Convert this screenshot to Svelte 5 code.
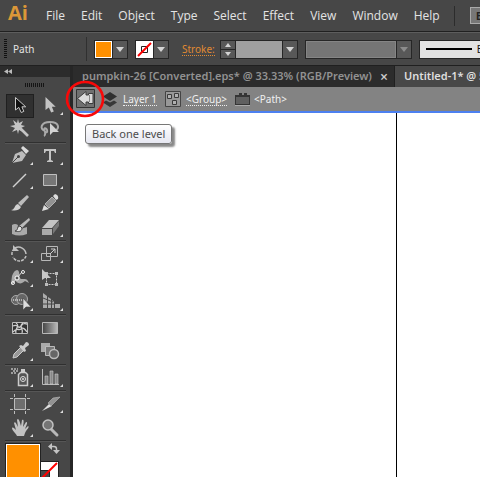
<script lang="ts">
  const menus = ["File", "Edit", "Object", "Type", "Select", "Effect", "View", "Window", "Help"];

  type Tool = { name: string; icon: string; flyout?: boolean };

  const groups: Tool[][] = [
    [
      { name: "Selection", icon: `<path d="M9.5 3.5V16l3.3-2.6 2.4 5.1 2.6-1.1-1.9-4.6h3.8z" fill="#111" stroke="#c9c9c9"/>` },
      { name: "Direct Selection", flyout: true, icon: `<path d="M9.5 3V16l3.3-2.6 2.4 5.1 2.6-1.1-1.9-4.6h3.8z" fill="#c4c4c4"/>` },
      { name: "Magic Wand", icon: `<path d="M14 10l8 8" stroke="#c4c4c4" stroke-width="2.6"/><path d="M12 1l1 4 4-2-2 4 4 1-4 2 2 4-4-2-1 4-1-4-5 2 3-4-5-2 5-1-2-5 4 3z" fill="#c4c4c4"/>` },
      { name: "Lasso", icon: `<path d="M9 13C3 11 5 4 14 4s10 6 5 9M9 13c-2-3 1-4 2-1s-2 3-2 1c0 3 1 4-1 5" stroke="#aaa" stroke-width="2"/><path d="M14 5v12l3-3h6z" fill="#d2d2d2"/>` },
    ],
    [
      { name: "Pen", flyout: true, icon: `<path d="M6 19l3-9 7-3 4 4-4 6z" fill="#bcbcbc"/><path d="M15 4l2-2 6 5-3 3z" fill="#dadada"/><path d="M6 19l6-6" stroke="#444"/><circle cx="12.5" cy="12.5" r="1.5" fill="#444"/>` },
      { name: "Type", flyout: true, icon: `<path d="M8 5h12v4h-1l-1-2h-3v9l2 1v1h-6v-1l2-1V7h-3L9 9H8z" fill="#c4c4c4"/>` },
      { name: "Line Segment", flyout: true, icon: `<path d="M7 19L20 6" stroke="#d0d0d0" stroke-width="1.5"/>` },
      { name: "Rectangle", flyout: true, icon: `<path d="M7.5 6.5h13v11h-13z" fill="#777" stroke="#c0c0c0"/>` },
      { name: "Paintbrush", icon: `<path d="M21 3l2 2-8 9-3-3z" fill="#bcbcbc"/><path d="M5 18c4 0 3-5 7-6l3 3c-2 4-7 4-10 3z" fill="#d0d0d0"/>` },
      { name: "Pencil", flyout: true, icon: `<path d="M6 19l2-6 5 4z" fill="#ddd"/><path d="M9 12l7-7 4 4-7 7z" fill="#929292" stroke="#b0b0b0"/><path d="M17 4l2-2q4 1 3 5l-2 1z" fill="#ddd"/>` },
      { name: "Blob Brush", icon: `<path d="M6 9q3-2 6 0l-1 5 10-3v7q-8 3-15 0z" fill="#aaa"/><path d="M23 2l1 2-8 8-3-2z" fill="#bbb"/><path d="M9 15c4-1 1-4 5-5l2 2c0 4-4 4-7 3z" fill="#e0e0e0" stroke="#444"/>` },
      { name: "Eraser", flyout: true, icon: `<path d="M6 12l7-8h10l-7 8z" fill="#c4c4c4"/><path d="M6 13h10v6H6z" fill="#aaa"/><path d="M17 12l6-7v5l-6 8z" fill="#777"/>` },
    ],
    [
      { name: "Rotate", flyout: true, icon: `<path d="M9 6a7.5 7.5 0 0 1 11 6" stroke="#c0c0c0" stroke-width="1.5"/><path d="M20 14a7 7 0 0 1-13 1M6 13a7 7 0 0 1 2-6" stroke="#c0c0c0" stroke-width="1.5" stroke-dasharray="3 1"/><path d="M7 3v6h6z" fill="#c0c0c0"/>` },
      { name: "Scale", flyout: true, icon: `<path d="M10.500 4.500h11v10h-11zM5.500 11.500h9v7h-9z" stroke="#b8b8b8"/><path d="M14 12l5-5m-4 0h4v4" stroke="#ccc"/>` },
      { name: "Width", flyout: true, icon: `<path d="M6 10c2-6 6-8 7-4 1 5 0 7 3 7s5-1 7 4l-4-2c-5 5-9 1-10-1-2 5-3 5-4 4z" fill="#aaa"/><path d="M7 17L16 6" stroke="#ddd"/><circle cx="7" cy="17" r="1.500" stroke="#eee"/><circle cx="17" cy="6" r="1.500" stroke="#eee"/><circle cx="11" cy="12" r="2" fill="#555" stroke="#fff"/>` },
      { name: "Free Transform", icon: `<path d="M10.500 7.500h10v11h-10z" stroke="#ccc" stroke-dasharray="2 1"/><path d="M9 6h3v3H9zM19 6h3v3h-3zM9 17h3v3H9zM19 17h3v3h-3z" fill="#bbb"/><path d="M6 3v11l3-2h6z" fill="#c8c8c8"/>` },
      { name: "Shape Builder", flyout: true, icon: `<circle cx="10" cy="10" r="4.500" fill="#666" stroke="#aaa"/><circle cx="16" cy="9" r="5.500" fill="#666" stroke="#aaa"/><path d="M7 10h11" stroke="#fff" stroke-dasharray="1 1"/><path d="M17 8v12l3-3h5z" fill="#ddd" stroke="#444" stroke-width=".6"/>` },
      { name: "Perspective Grid", flyout: true, icon: `<path d="M7 3l4 3v12H7zM12 7l3 2v9h-3zM16 10l2 2v6h-2zM19 14h5v4h-5z" fill="#ababab"/><path d="M7 14h12M7 8l10 4" stroke="#474747"/>` },
    ],
    [
      { name: "Mesh", icon: `<path d="M6.500 6.500h15v11h-15z" fill="#333" stroke="#bbb"/><path d="M7 10c5-3 5 4 8 0s3-2 6-2M7 16c4-5 6-1 8-3s4 0 6 3M10 7c5 3-2 6 0 10M17 7c-5 3 1 6-1 10" stroke="#ccc" stroke-width="1.300"/>` },
      { name: "Gradient", icon: `<linearGradient id="shade"><stop stop-color="#444"/><stop offset="1" stop-color="#bbb"/></linearGradient><path d="M6.500 6.500h15v11h-15z" fill="url(#shade)" stroke="#b8b8b8"/>` },
      { name: "Eyedropper", flyout: true, icon: `<path d="M7 18l1-4 7-7 3 3-7 7z" fill="#999" stroke="#ccc"/><path d="M13 6l2-1 2 1 3-4q3 0 3 3l-4 3 1 3-2 1z" fill="#ccc"/>` },
      { name: "Blend", icon: `<path d="M5 3h9v9H5z" fill="#aaa"/><path d="M9.500 6.500h9v9h-9z" fill="#777" stroke="#bbb"/><circle cx="18" cy="14" r="4.500" fill="#666" stroke="#bbb" stroke-width="1.500"/>` },
    ],
    [
      { name: "Symbol Sprayer", flyout: true, icon: `<path d="M5 3h7M7 5h6M5 7h5" stroke="#bbb" stroke-width="1.500" stroke-dasharray="2 1"/><path d="M15 3h4v3h-4z" fill="#ccc"/><path d="M12.500 8.500l2-2h5l2 2v11h-9z" fill="#555" stroke="#ccc" stroke-width="1.500"/><circle cx="17" cy="13" r="2.500" stroke="#ddd"/><circle cx="17" cy="13" r="1" fill="#ddd"/>` },
      { name: "Column Graph", flyout: true, icon: `<path d="M6.500 3v15.500H23" stroke="#bbb"/><path d="M9 10h3v8H9zM14 5h3v13h-3zM19 8h3v10h-3z" fill="#888" stroke="#ccc" stroke-width=".6"/>` },
    ],
    [
      { name: "Artboard", icon: `<path d="M8.500 6.500h11v11h-11z" fill="#6e6e6e" stroke="#bdbdbd"/><path d="M8.500 2v3M19.500 2v3M8.500 19v3M19.500 19v3M4 6.500h3M21 6.500h3M4 17.500h3M21 17.500h3" stroke="#bdbdbd"/>` },
      { name: "Slice", flyout: true, icon: `<path d="M6 19l7-7 3 2z" fill="#ddd"/><path d="M12 11l5-5 7-1-9 9z" fill="#929292" stroke="#bbb" stroke-width=".6"/>` },
      { name: "Hand", flyout: true, icon: `<path d="M11 20c-1-3-5-5-5-8 1-1 2 0 4 2L8 7c1-2 2 0 4 4l-1-7c1-2 2-1 4 6l1-6c2-1 2 1 1 7l3-5c2 0 1 2-1 7l3-3c2 1-1 3-3 7l-1 3z" fill="#c2c2c2"/>` },
      { name: "Zoom", icon: `<path d="M15 13l6 6" stroke="#b8b8b8" stroke-width="3" stroke-linecap="round"/><circle cx="12" cy="9" r="5" fill="#757575" stroke="#c2c2c2" stroke-width="1.500"/>` },
    ],
  ];

  let active = $state("Selection");
</script>

<div class="window">
  <header class="menubar">
    <span class="logo">Ai</span>
    <nav class="menus">
      {#each menus as menu}
        <button class="menu">{menu}</button>
      {/each}
    </nav>
    <button class="bridge" aria-label="Go to Bridge">Br</button>
  </header>

  <section class="control-bar">
    <span class="grip"></span>
    <span class="selection-type">Path</span>

    <div class="combo fill">
      <button class="swatch orange" aria-label="Fill color"></button>
      <button class="drop" aria-label="Fill swatches"><i class="down"></i></button>
    </div>
    <div class="combo">
      <button class="swatch" aria-label="Stroke color">
        <svg width="17" height="17" viewBox="0 0 17 17">
          <path d="M0 0h17v17H0z" fill="#fff" />
          <path d="M5.500 5.500h6v6h-6z" fill="#fff" stroke="#222" />
          <path d="M2 15L15 2" stroke="#f00" stroke-width="2" />
        </svg>
      </button>
      <button class="drop" aria-label="Stroke swatches"><i class="down"></i></button>
    </div>

    <label class="stroke-label" for="stroke-weight">Stroke:</label>
    <div class="combo weight">
      <span class="stepper">
        <button aria-label="Increase stroke"><i class="up"></i></button>
        <button aria-label="Decrease stroke"><i class="down"></i></button>
      </span>
      <input id="stroke-weight" type="text" />
      <button class="drop" aria-label="Stroke weights"><i class="down"></i></button>
    </div>
    <div class="combo profile">
      <input type="text" aria-label="Width profile" disabled />
      <button class="drop" aria-label="Width profiles" disabled><i class="down"></i></button>
    </div>
    <button class="brush" aria-label="Brush definition"><span class="brush-line"></span>Basic</button>
  </section>

  <div class="workspace">
    <aside class="tools">
      <button class="collapse" aria-label="Collapse panel">
        <svg width="9" height="5" viewBox="0 0 9 5"><path d="M4 0v5L0 2.500zM8 0v5L4 2.500z" fill="#bbb" /></svg>
      </button>
      <div class="panel-grip"></div>
      {#each groups as group}
        <div class="tool-group">
          {#each group as tool}
            <button
              class="tool"
              class:active={active === tool.name}
              aria-label={tool.name}
              onclick={() => (active = tool.name)}
            >
              <svg width="28" height="24" viewBox="0 0 28 24" fill="none">
                {@html tool.icon}
                {#if tool.flyout}<path d="M27 18v3h-3z" fill="#ddd" />{/if}
              </svg>
            </button>
          {/each}
        </div>
      {/each}
      <div class="colors">
        <button class="color-fill" aria-label="Fill"></button>
        <button class="swap" aria-label="Swap fill and stroke">
          <svg width="12" height="12" viewBox="0 0 12 12" fill="none">
            <path d="M3 3.500h3q2.500 0 2.500 2.500v3" stroke="#c4c4c4" stroke-width="1.500" />
            <path d="M0 3.500L4 0v7zM5 7h7l-3.500 4z" fill="#c4c4c4" />
          </svg>
        </button>
        <button class="color-stroke" aria-label="Stroke">
          <svg width="34" height="34" viewBox="0 0 34 34" fill="none">
            <path d="M0 0h34v34H0zM9 9v16h16V9z" fill="#fff" fill-rule="evenodd" />
            <path d="M8.500 8.500h17v17h-17z" stroke="#222" />
            <path d="M1 33L33 1" stroke="#f00" stroke-width="2" />
          </svg>
        </button>
      </div>
    </aside>

    <main class="document">
      <div class="tabs">
        <div class="tab">
          <span>pumpkin-26 [Converted].eps* @ 33.33% (RGB/Preview)</span>
          <button class="close" aria-label="Close document">×</button>
        </div>
        <div class="tab current"><span>Untitled-1* @ 50% (RGB/Preview)</span></div>
      </div>

      <div class="breadcrumbs">
        <div class="back-wrap">
          <button class="back" aria-label="Back one level" aria-describedby="back-tip">
            <svg width="19" height="19" viewBox="0 0 19 19">
              <path d="M.5.5h18v18H.5z" fill="#707070" stroke="#333" />
              <path d="M1.500 9.500L10 2.500v3.500h2.500V4.500H17v10h-4.500V13H10v3.500z" fill="#dadada" stroke="#3c3c3c" />
              <path d="M13.500 6v7" stroke="#888" />
            </svg>
          </button>
          <svg class="ring" width="40" height="38" viewBox="0 0 40 38" fill="none">
            <ellipse cx="20" cy="19" rx="18" ry="17" stroke="#f80808" stroke-width="2.600" />
          </svg>
          <div class="tooltip" id="back-tip" role="tooltip">Back one level</div>
        </div>
        <svg class="layers" width="14" height="15" viewBox="0 0 14 15">
          <path d="M0 10.500l3-2 4 2 4-2 3 2-7 4.500z" fill="#383838" />
          <path d="M7 0l7 4.500L7 9 0 4.500z" fill="#303030" />
        </svg>
        <a href="#layer">Layer 1</a>
        <svg class="group-icon" width="16" height="16" viewBox="0 0 16 16">
          <path d="M.5.5h15v15H.5z" fill="#989898" stroke="#444" />
          <path d="M2.500 3.500h4v4h-4zM9.500 2.500h4v4h-4zM7.500 9.500h4v4h-4z" fill="#b0b0b0" stroke="#3b3b3b" />
        </svg>
        <a href="#group">&lt;Group&gt;</a>
        <svg class="path-icon" width="15" height="13" viewBox="0 0 15 13">
          <path d="M1 2h3V0h3v2h2V0h3v2h3v10H0V2z" fill="#353535" />
          <path d="M1 4h13v7H1z" fill="#606060" />
          <path d="M0 12.500h15" stroke="#aaa" />
        </svg>
        <span class="leaf">&lt;Path&gt;</span>
      </div>

      <div class="canvas">
        <div class="pasteboard"></div>
        <div class="artboard"></div>
      </div>
    </main>
  </div>
</div>

<style>
  :global(body) {
    margin: 0;
    background: #474747;
  }

  .window {
    display: flex;
    flex-direction: column;
    height: 100vh;
    overflow: hidden;
    background: #474747;
    color: #e4e4e4;
    font: 11px/16px "Noto Sans", "Open Sans", sans-serif;
  }

  button {
    margin: 0;
    padding: 0;
    border: 0;
    background: none;
    color: inherit;
    font: inherit;
    flex-shrink: 0;
  }

  svg {
    display: block;
    flex-shrink: 0;
  }

  .menubar {
    display: flex;
    align-items: center;
    flex-shrink: 0;
    height: 31px;
    padding-left: 8px;
    border-bottom: 1px solid #202020;
  }

  .logo {
    flex-shrink: 0;
    width: 38px;
    padding-bottom: 6px;
    color: #dc9738;
    font: bold 20px/24px "Open Sans", sans-serif;
  }

  .menus {
    display: flex;
    flex-shrink: 0;
    gap: 16px;
    padding-right: 14px;
    border-right: 1px solid #2c2c2c;
    font: 12px/20px "Open Sans", sans-serif;
  }

  .bridge {
    height: 17px;
    width: 24px;
    margin-left: 15px;
    border: 1px solid #aaa;
    background: #777;
    color: #222;
    font-size: 10px;
    font-weight: bold;
    line-height: 14px;
  }

  .control-bar {
    display: flex;
    align-items: center;
    flex-shrink: 0;
    height: 32px;
    border-top: 1px solid #5d5d5d;
    border-bottom: 1px solid #202020;
    font-size: 10px;
    white-space: nowrap;
  }

  .grip {
    flex-shrink: 0;
    width: 3px;
    height: 20px;
    margin: 0 6px 0 4px;
    background: repeating-linear-gradient(#111 0 1px, #474747 1px 2px);
  }

  .selection-type {
    flex-shrink: 0;
    width: 73px;
    height: 24px;
    border-right: 1px solid #303030;
    line-height: 24px;
  }

  .combo {
    display: flex;
    box-sizing: border-box;
    flex-shrink: 0;
    height: 19px;
    border: 1px solid #262626;
  }

  .combo input {
    box-sizing: border-box;
    min-width: 0;
    flex: 1;
    padding: 0 2px;
    border: 0;
    background: #a0a0a0;
  }

  .fill {
    margin: 0 7px;
  }

  .swatch {
    width: 17px;
  }

  .orange {
    box-sizing: border-box;
    border: 1px solid #fff;
    background: #ff9000;
  }

  .drop {
    display: grid;
    place-items: center;
    width: 15px;
    border-left: 1px solid #262626;
    background: #585858;
  }

  .up,
  .down {
    width: 0;
    border: 3px solid transparent;
  }

  .up {
    border-top: 0;
    border-bottom: 4px solid #d4d4d4;
  }

  .down {
    border-bottom: 0;
    border-top: 4px solid #d4d4d4;
  }

  .drop .down {
    border-width: 5px 4px 0;
  }

  .stroke-label {
    flex-shrink: 0;
    margin: 0 5px 0 13px;
    border-bottom: 1px dotted #e08a32;
    color: #e08a32;
    line-height: 12px;
  }

  .weight {
    width: 78px;
  }

  .stepper {
    display: grid;
    grid-template-rows: 1fr 1fr;
    width: 14px;
    gap: 1px;
    border-right: 1px solid #262626;
    background: #262626;
  }

  .stepper button {
    display: grid;
    place-items: center;
    background: #585858;
  }

  .profile {
    width: 107px;
    margin: 0 7px;
  }

  .profile input {
    border: 1px solid #858585;
    background: #757575;
  }

  .profile .down {
    border-top-color: #8c8c8c;
  }

  .brush {
    display: flex;
    box-sizing: border-box;
    align-items: center;
    gap: 5px;
    height: 19px;
    padding: 0 6px;
    border: 1px solid #262626;
    background: #e2e2e2;
    color: #111;
  }

  .brush-line {
    width: 46px;
    height: 2px;
    background: #000;
  }

  .workspace {
    display: flex;
    flex: 1;
    min-height: 0;
  }

  .tools {
    flex-shrink: 0;
    width: 70px;
    border-right: 3px solid #262626;
  }

  .collapse {
    display: flex;
    align-items: center;
    width: 100%;
    height: 11px;
    padding-left: 4px;
    background: #2c2c2c;
  }

  .panel-grip {
    width: 20px;
    height: 4px;
    margin: 6px auto 7px 25px;
    background: repeating-linear-gradient(90deg, #151515 0 1px, #474747 1px 2px);
  }

  .tool-group {
    display: grid;
    grid-template-columns: 28px 28px;
    column-gap: 2px;
    width: 60px;
    margin-left: 5px;
    padding-left: 1px;
    border-bottom: 1px solid #303030;
    box-shadow: 0 1px #565656;
    margin-bottom: 1px;
  }

  .tool {
    height: 24px;
  }

  .tool.active {
    background: #303030;
    box-shadow: inset 0 0 0 1px #202020;
  }

  .colors {
    position: relative;
    display: flex;
    align-items: flex-start;
    gap: 7px;
    height: 54px;
    margin: 2px 5px;
  }

  .color-fill {
    position: relative;
    z-index: 1;
    width: 36px;
    height: 36px;
    border: 1px solid #222;
    background: #ff9000;
    box-shadow: inset 0 0 0 1px #fff;
  }

  .color-stroke {
    position: absolute;
    left: 18px;
    top: 18px;
    width: 36px;
    height: 36px;
    border: 1px solid #222;
  }

  .document {
    display: flex;
    flex-direction: column;
    flex: 1;
    min-width: 0;
  }

  .tabs {
    display: flex;
    flex-shrink: 0;
    height: 21px;
    background: #2c2c2c;
    color: #929292;
    font-weight: 600;
    line-height: 20px;
    white-space: nowrap;
  }

  .tab {
    display: flex;
    flex-shrink: 0;
    gap: 8px;
    padding: 0 6px 0 9px;
    border-right: 1px solid #202020;
  }

  .current {
    background: #484848;
    color: #dedede;
  }

  .close {
    color: #ccc;
    font-size: 14px;
  }

  .breadcrumbs {
    display: flex;
    align-items: center;
    flex-shrink: 0;
    height: 24px;
    padding-left: 3px;
    border-bottom: 2px solid #4c80f0;
    background: #838383;
    font-size: 10px;
    line-height: 12px;
    white-space: nowrap;
  }

  .breadcrumbs a {
    border-bottom: 1px dotted #eee;
    color: #f0f0f0;
    text-decoration: none;
  }

  .back-wrap {
    position: relative;
  }

  .ring {
    position: absolute;
    left: -11px;
    top: -9px;
    z-index: 2;
    pointer-events: none;
  }

  .tooltip {
    position: absolute;
    left: 9px;
    top: 35px;
    padding: 0 6px;
    border: 1px solid #777;
    border-radius: 3px;
    background: linear-gradient(#fff, #e6e7f1);
    box-shadow: 3px 3px 2px #0007;
    color: #4c4c4c;
    font: 11px/18px "Noto Sans", sans-serif;
  }

  .layers {
    margin: 0 6px 0 8px;
  }

  .group-icon {
    margin: 0 5px 0 8px;
  }

  .path-icon {
    margin: 0 4px 0 8px;
  }

  .leaf {
    color: #f0f0f0;
  }

  .canvas {
    display: grid;
    grid-template-columns: 323px 1fr;
    flex: 1;
    background: #fff;
  }

  .artboard {
    border-left: 1px solid #000;
  }
</style>
